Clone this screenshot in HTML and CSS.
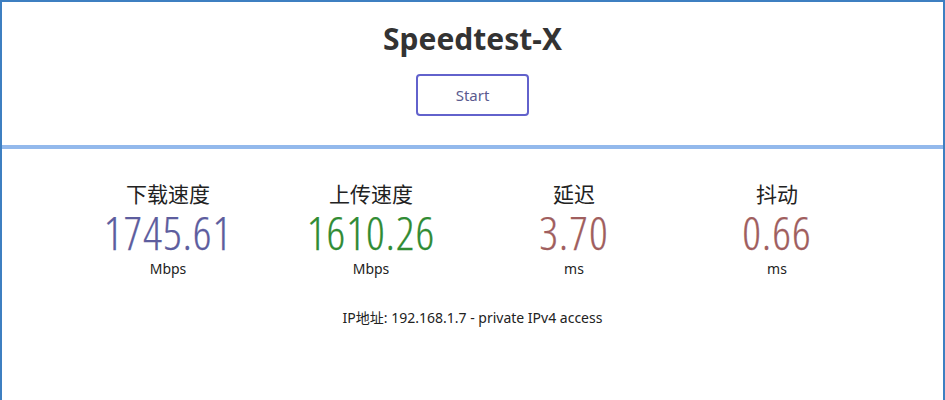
FILE: index.html
```html
<!DOCTYPE html>
<html lang="zh">
<head>
<meta charset="utf-8">
<title>Speedtest-X</title>
<link rel="stylesheet" href="styles.css">
</head>
<body>
<div class="frame">
  <header class="top">
    <h1 class="title">Speedtest-X</h1>
    <button class="start">Start</button>
  </header>
  <main class="results">
    <div class="stats">
      <div class="stat">
        <div class="label">下载速度</div>
        <div class="value dl">1745.61</div>
        <div class="unit">Mbps</div>
      </div>
      <div class="stat">
        <div class="label">上传速度</div>
        <div class="value ul">1610.26</div>
        <div class="unit">Mbps</div>
      </div>
      <div class="stat">
        <div class="label">延迟</div>
        <div class="value ping">3.70</div>
        <div class="unit">ms</div>
      </div>
      <div class="stat">
        <div class="label">抖动</div>
        <div class="value ping">0.66</div>
        <div class="unit">ms</div>
      </div>
    </div>
    <div class="ip">IP地址: 192.168.1.7 - private IPv4 access</div>
  </main>
</div>
</body>
</html>
```

FILE: styles.css
```css
html, body {
  margin: 0;
  padding: 0;
  background: #ffffff;
}
body {
  font-family: "Noto Sans", "Noto Sans CJK SC", sans-serif;
  color: #333333;
}
.frame {
  box-sizing: border-box;
  height: 400px;
  border: 2px solid #3d7fc1;
  border-bottom: none;
}
.top {
  height: 143px;
  border-bottom: 4px solid #93b9ec;
  display: flex;
  flex-direction: column;
  align-items: center;
}
.title {
  margin: 15px 0 0;
  font-size: 30px;
  font-weight: 700;
  line-height: 44px;
  color: #333333;
}
.start {
  margin-top: 13px;
  width: 113px;
  height: 42px;
  border: 2px solid #6262cc;
  border-radius: 4px;
  background: #ffffff;
  font-family: "Noto Sans", sans-serif;
  font-size: 15px;
  color: #5b5b8f;
}
.results {
  display: flex;
  flex-direction: column;
  align-items: center;
}
.stats {
  display: flex;
  margin-top: 30px;
}
.stat {
  width: 203px;
  text-align: center;
}
.label {
  font-family: "Noto Sans CJK SC", sans-serif;
  font-size: 21px;
  line-height: 28px;
  color: #222222;
}
.value {
  font-family: "Open Sans", "Noto Sans", sans-serif;
  font-weight: 300;
  font-stretch: 87.5%;
  font-size: 46px;
  line-height: 50px;
  letter-spacing: 1px;
  -webkit-text-stroke: 0.25px currentColor;
}
.dl { color: #5d5d9e; }
.ul { color: #308b33; }
.ping { color: #a05e5e; }
.unit {
  margin-top: 2px;
  font-size: 14px;
  line-height: 20px;
  color: #222222;
}
.ip {
  margin-top: 28px;
  font-size: 14px;
  color: #222222;
}
```
